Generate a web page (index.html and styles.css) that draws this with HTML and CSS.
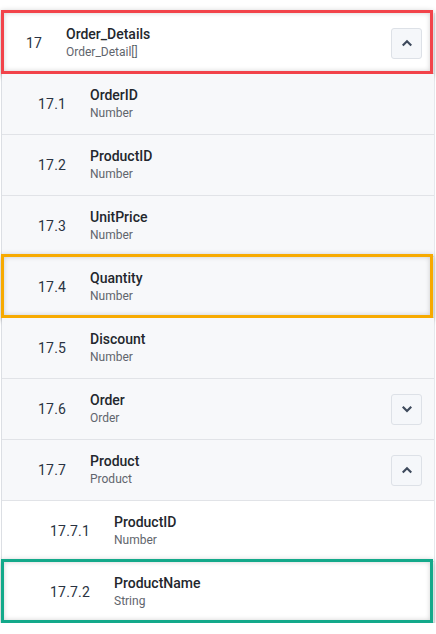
FILE: index.html
```html
<!DOCTYPE html>
<html lang="en">
<head>
    <meta charset="UTF-8">
    <meta name="viewport" content="width=device-width, initial-scale=1.0">
    <title>Schema fields</title>
    <link rel="stylesheet" href="styles.css">
</head>
<body>
    <div class="tree">
        <div class="row level-1 open mark-red">
            <span class="num">17</span>
            <div class="info">
                <div class="name">Order_Details</div>
                <div class="type">Order_Detail[]</div>
            </div>
            <button class="toggle" aria-label="Collapse">
                <svg width="10" height="10" viewBox="0 0 10 10"><polyline points="1.5,6.8 5,3.3 8.5,6.8" /></svg>
            </button>
        </div>

        <div class="row level-2">
            <span class="num">17.1</span>
            <div class="info">
                <div class="name">OrderID</div>
                <div class="type">Number</div>
            </div>
        </div>
        <div class="row level-2">
            <span class="num">17.2</span>
            <div class="info">
                <div class="name">ProductID</div>
                <div class="type">Number</div>
            </div>
        </div>
        <div class="row level-2">
            <span class="num">17.3</span>
            <div class="info">
                <div class="name">UnitPrice</div>
                <div class="type">Number</div>
            </div>
        </div>
        <div class="row level-2 mark-orange">
            <span class="num">17.4</span>
            <div class="info">
                <div class="name">Quantity</div>
                <div class="type">Number</div>
            </div>
        </div>
        <div class="row level-2">
            <span class="num">17.5</span>
            <div class="info">
                <div class="name">Discount</div>
                <div class="type">Number</div>
            </div>
        </div>
        <div class="row level-2">
            <span class="num">17.6</span>
            <div class="info">
                <div class="name">Order</div>
                <div class="type">Order</div>
            </div>
            <button class="toggle" aria-label="Expand">
                <svg width="10" height="10" viewBox="0 0 10 10"><polyline points="1.5,3.5 5,7 8.5,3.5" /></svg>
            </button>
        </div>
        <div class="row level-2">
            <span class="num">17.7</span>
            <div class="info">
                <div class="name">Product</div>
                <div class="type">Product</div>
            </div>
            <button class="toggle" aria-label="Collapse">
                <svg width="10" height="10" viewBox="0 0 10 10"><polyline points="1.5,6.8 5,3.3 8.5,6.8" /></svg>
            </button>
        </div>

        <div class="row level-3">
            <span class="num">17.7.1</span>
            <div class="info">
                <div class="name">ProductID</div>
                <div class="type">Number</div>
            </div>
        </div>
        <div class="row level-3 mark-green">
            <span class="num">17.7.2</span>
            <div class="info">
                <div class="name">ProductName</div>
                <div class="type">String</div>
            </div>
        </div>
    </div>
</body>
</html>
```

FILE: styles.css
```css
body {
    margin: 0;
    background: #ffffff;
    font-family: Roboto, "Liberation Sans", Arial, sans-serif;
}
.tree {
    margin: 13px 1px 0 1px;
    border-left: 1px solid #dcdfe4;
    border-right: 1px solid #e6e8ec;
}
.row {
    position: relative;
    display: flex;
    align-items: center;
    height: 60px;
    border-bottom: 1px solid #e1e3e7;
    background-color: #f7f8fa;
}
.row.level-1,
.row.level-3 {
    background-color: #ffffff;
}
.num {
    flex: none;
    font-size: 14px;
    color: #2a3342;
    letter-spacing: 0.2px;
}
.level-1 .num {
    padding-left: 24px;
    width: 40px;
}
.level-2 .num {
    padding-left: 36px;
    width: 52px;
}
.level-3 .num {
    padding-left: 48px;
    width: 64px;
}
.info {
    flex: 1;
    padding-bottom: 1px;
}
.name {
    font-size: 14px;
    font-weight: 500;
    line-height: 18px;
    color: #23272d;
}
.type {
    margin-top: 1px;
    font-size: 12px;
    line-height: 16px;
    color: #5f656d;
}
.toggle {
    flex: none;
    width: 31px;
    height: 31px;
    margin-right: 12px;
    padding: 0;
    display: flex;
    align-items: center;
    justify-content: center;
    background-color: #f5f7fa;
    border: 1px solid #dde1e7;
    border-radius: 3px;
    cursor: pointer;
}
.toggle polyline {
    fill: none;
    stroke: #3e4a5c;
    stroke-width: 2.2;
    stroke-linecap: square;
}
/* highlight frames drawn over the rows */
.mark-red::after,
.mark-orange::after,
.mark-green::after {
    content: "";
    position: absolute;
    top: -3px;
    bottom: -1px;
    left: -1px;
    right: 1px;
    border: 3px solid;
    box-shadow: 0 2px 6px rgba(0, 0, 0, 0.32), inset 0 0 5px rgba(0, 0, 0, 0.18);
    pointer-events: none;
}
.mark-red::after {
    border-color: #f2434a;
}
.mark-orange::after {
    border-color: #f7aa00;
}
.mark-green::after {
    border-color: #13a98a;
}
```
